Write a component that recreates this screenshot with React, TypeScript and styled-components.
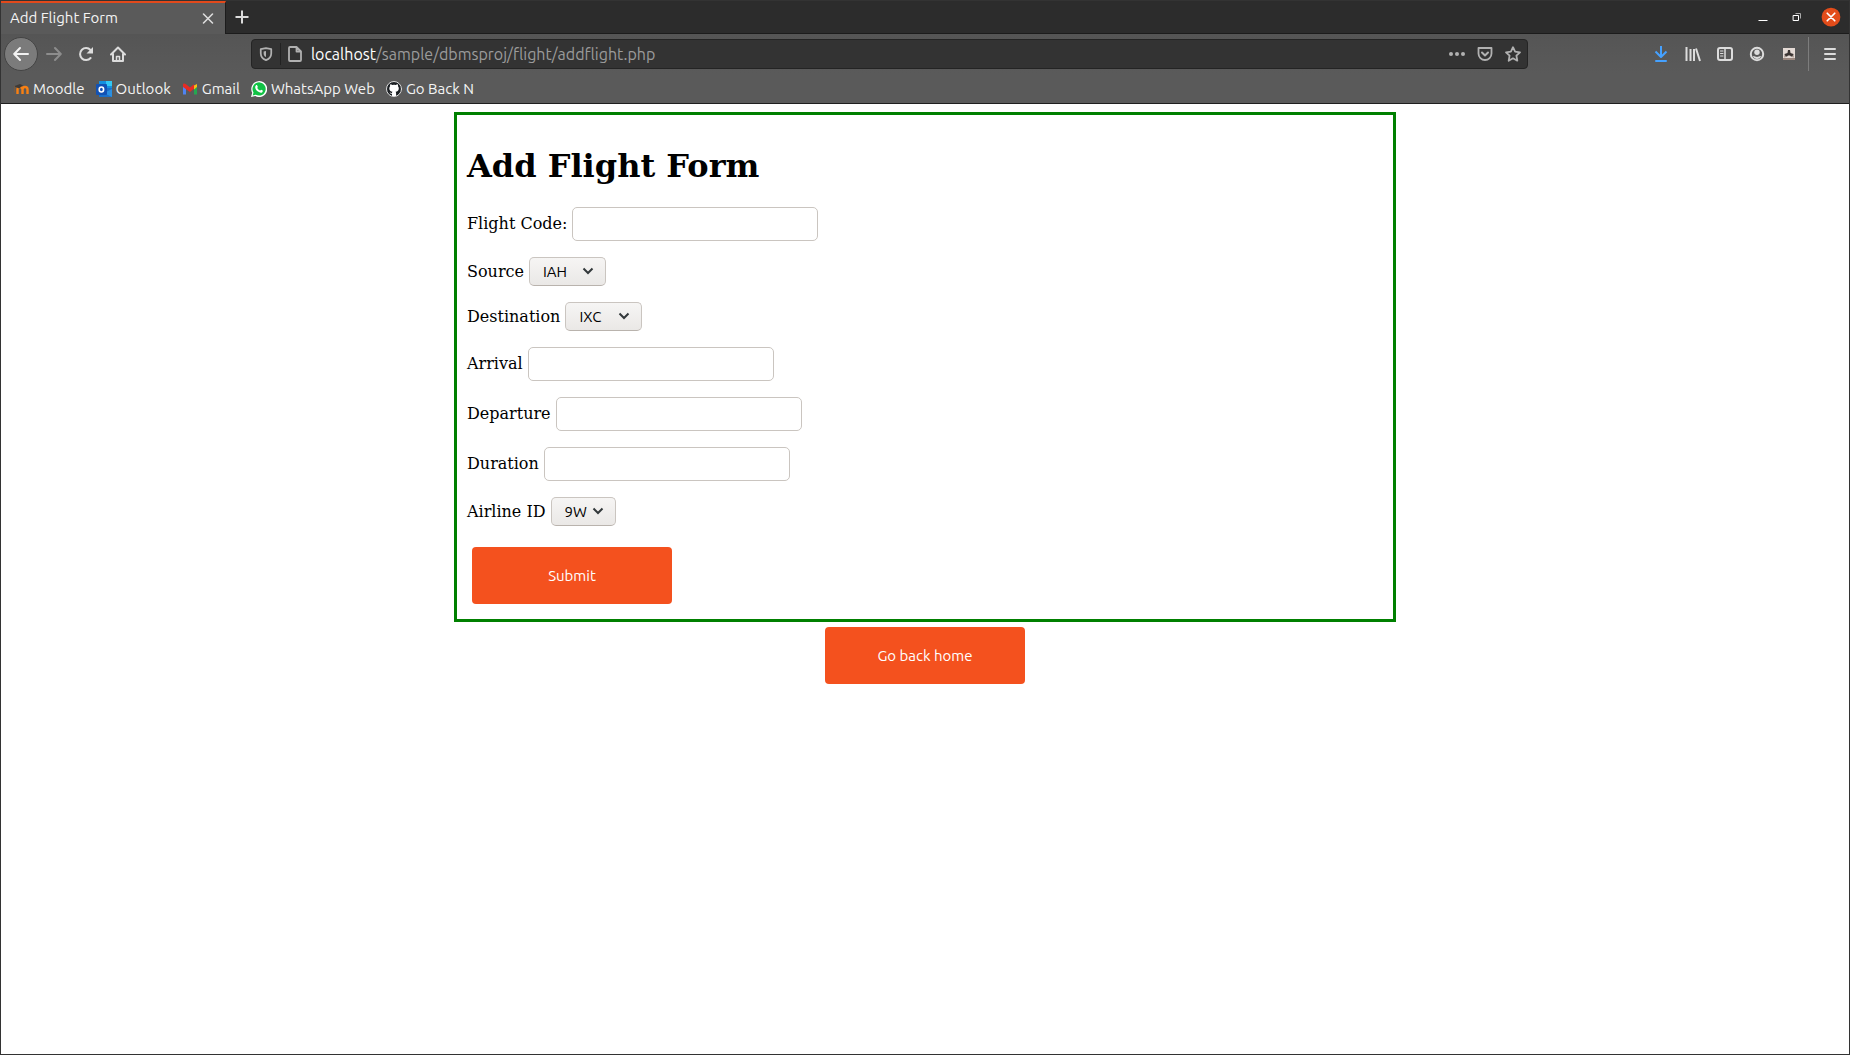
import React from "react";
import styled, { createGlobalStyle, css } from "styled-components";

const ui = `"Ubuntu", "Noto Sans", sans-serif`;
const serif = `"DejaVu Serif", serif`;

const GlobalStyle = createGlobalStyle`
  *, *::before, *::after { box-sizing: border-box; }
  body { margin: 0; background: #fff; }
  button, input, select { margin: 0; font: inherit; }
`;

const Window = styled.div`
  display: flex;
  flex-direction: column;
  min-height: 100vh;
  border: 1px solid #333;
  background: #fff;
  font-family: ${ui};
  font-size: 15px;
`;

const TitleBar = styled.header`
  display: flex;
  align-items: stretch;
  height: 33px;
  background: #2c2c2c;
`;

const Tab = styled.div`
  display: flex;
  align-items: center;
  justify-content: space-between;
  width: 225px;
  padding: 0 9px 2px;
  border-top: 2px solid #e2491b;
  border-right: 1px solid #1c1c1c;
  background: #5a5a5a;
  color: #f4f4f4;
`;

const TitleRest = styled.div`
  display: flex;
  flex: 1;
  align-items: center;
  justify-content: space-between;
  padding: 0 8px 0 0;
  border-bottom: 1px solid #1c1c1c;
`;

const WindowControls = styled.div`
  display: flex;
  align-items: center;
  gap: 14px;
`;

const IconButton = styled.button<{ $size?: number; $round?: boolean }>`
  display: flex;
  align-items: center;
  justify-content: center;
  flex: none;
  width: ${(p) => p.$size ?? 32}px;
  height: ${(p) => p.$size ?? 32}px;
  padding: 0;
  border: 0;
  background: transparent;
  color: #dcdcdc;
  ${(p) =>
    p.$round &&
    css`
      border: 1px solid #444;
      border-radius: 50%;
      background: #7b7b7b;
      color: #f2f2f2;
    `}
  &:disabled { color: #8d8d8d; }
`;

const NavBar = styled.nav`
  display: flex;
  align-items: center;
  height: 40px;
  padding: 0 3px;
  background: linear-gradient(#555, #5a5a5a);
`;

const Spacer = styled.div`
  flex: 11 1 0;
`;

const Divider = styled.span`
  width: 1px;
  height: 34px;
  margin: 0 5px 0 3px;
  background: #7d7d7d;
`;

const UrlBar = styled.div`
  display: flex;
  flex: 120 1 0;
  align-items: center;
  height: 30px;
  min-width: 0;
  border: 1px solid #242424;
  border-radius: 4px;
  background: #333;

  ${IconButton} {
    color: #b1b1b1;
  }
`;

const UrlDivider = styled.span`
  width: 1px;
  height: 22px;
  background: #222;
`;

const UrlText = styled.div`
  flex: 1;
  overflow: hidden;
  padding-left: 2px;
  color: #9b9b9b;
  font-size: 16px;
  white-space: nowrap;

  strong {
    color: #fff;
    font-weight: 400;
  }
`;

const Bookmarks = styled.nav`
  display: flex;
  align-items: center;
  gap: 11px;
  height: 30px;
  padding: 0 12px;
  border-bottom: 1px solid #1f1f1f;
  background: #5a5a5a;
`;

const Bookmark = styled.a`
  display: flex;
  align-items: center;
  gap: 4px;
  color: #f4f4f4;
  text-decoration: none;
  white-space: nowrap;
`;

const Page = styled.main`
  display: flex;
  flex-direction: column;
  align-items: center;
  flex: 1;
  gap: 5px;
  padding: 8px;
  color: #000;
`;

const FlightForm = styled.form`
  display: flex;
  flex-direction: column;
  align-items: flex-start;
  gap: 16px;
  box-sizing: content-box;
  width: 50%;
  padding: 10px 10px 15px;
  border: 3px solid #008000;
  font-family: ${serif};
  font-size: 16px;
`;

const Heading = styled.h1`
  margin: 22px 0 6px;
  font-size: 32px;
  line-height: 38px;
`;

const Field = styled.div`
  display: flex;
  align-items: baseline;
  gap: 5px;
`;

const TextInput = styled.input`
  width: 246px;
  height: 34px;
  padding: 0 8px 2px;
  border: 1px solid #cac5c0;
  border-radius: 5px;
  background: #fff;
  font-family: ${ui};
  font-size: 15px;
`;

const SelectBox = styled.span`
  position: relative;
  display: flex;
`;

const Select = styled.select<{ $narrow?: boolean }>`
  appearance: none;
  width: ${(p) => (p.$narrow ? 65 : 77)}px;
  height: 29px;
  padding: 0 0 0 13px;
  border: 1px solid #cac5c0;
  border-bottom-color: #b9b3ad;
  border-radius: 5px;
  background: linear-gradient(#f6f5f4, #eae8e6);
  color: #000;
  font-family: ${ui};
  font-size: 15px;
`;

const Chevron = styled.svg`
  position: absolute;
  top: 9px;
  right: 12px;
  pointer-events: none;
`;

const ActionButton = styled.button<{ $inForm?: boolean }>`
  width: 200px;
  height: 57px;
  margin: ${(p) => (p.$inForm ? "5px 0 0 5px" : "0")};
  border: 0;
  border-radius: 4px;
  background: #f4511e;
  color: #fff;
  font-family: ${ui};
  font-size: 15px;
`;

type IconProps = { size?: number; children: React.ReactNode; width?: number };

const Icon = ({ size = 16, width = 2, children }: IconProps) => (
  <svg
    width={size}
    height={size}
    viewBox="0 0 16 16"
    fill="none"
    stroke="currentColor"
    strokeWidth={width}
    strokeLinecap="round"
    strokeLinejoin="round"
    aria-hidden="true"
  >
    {children}
  </svg>
);

const MoodleIcon = () => (
  <Icon>
    <path d="M4.5 13V8.5a2.5 2.5 0 0 1 5 0V13M9.5 8.5a2.5 2.5 0 0 1 5 0V13" stroke="#f98012" strokeWidth="2.4" strokeLinecap="butt" />
    <path d="M1 5.2 7 3l3 1.5-4 3z" fill="#3f3a36" stroke="none" />
    <path d="M1.5 5.5V11" stroke="#7b5a3c" strokeWidth="1" />
  </Icon>
);

const OutlookIcon = () => (
  <Icon>
    <g stroke="none">
      <path d="M3 0h13v8H3z" fill="#1490df" />
      <path d="M10 0h6v5h-6z" fill="#32c8f5" />
      <path d="M3 7h13v9H3z" fill="#1a6fc9" />
      <path d="m16 8-8 4 8 4z" fill="#2b8fe0" />
      <rect x="0" y="3" width="11" height="11" rx="1" fill="#1252b4" />
    </g>
    <ellipse cx="5.4" cy="8.5" rx="2.2" ry="2.5" stroke="#fff" strokeWidth="1.6" />
  </Icon>
);

const GmailIcon = () => (
  <Icon>
    <g stroke="none">
      <path d="M1 5v8.5h3V7z" fill="#4f83f1" />
      <path d="M12 7v6.500h3V5z" fill="#25a750" />
      <path d="M12 4.500 15 3v3l-3 2.500z" fill="#f6bb13" />
      <path d="M1 3.500C1 2.300 2.800 2.200 4 3.300L8 6.500l4-3.200v4.500L8 11 1 6z" fill="#e62b24" />
    </g>
  </Icon>
);

const WhatsAppIcon = () => (
  <Icon>
    <path d="M0 16 1.200 11.800A8 8 0 1 1 4.300 15z" fill="#fff" stroke="none" />
    <path d="m1.700 14.400.8-2.900a6.600 6.600 0 1 1 2.300 2.200z" fill="#11c245" stroke="none" />
    <path d="M5 4.200c.5-.4 1-.3 1.200.2l.6 1.400c.1.400-.6 1-.5 1.300.6 1.200 1.400 1.900 2.600 2.400.4.100.9-.9 1.300-.8l1.500.8c.4.300 0 1.400-.7 1.900-1 .6-2.600.2-4-.8C5.400 9.500 4.300 8 4.200 6.500c0-1 .3-1.900.8-2.300z" fill="#fff" stroke="none" />
  </Icon>
);

const GitHubIcon = () => (
  <Icon>
    <circle cx="8" cy="8" r="7.500" fill="#1b1f23" stroke="#dedede" strokeWidth="1" />
    <path d="M6 15v-2.200c-1.500.2-2-.8-2.500-1.500 1 0 1.300.9 2.500.8 0-.6.200-1 .5-1.300-2-.3-3.200-1.300-3.200-3.500 0-.8.300-1.500.8-2-.2-.8-.1-1.500.2-2 .9 0 1.500.4 2 .8a7 7 0 0 1 3.500 0c.5-.4 1.200-.8 2-.8.300.6.300 1.300.2 2 .5.500.8 1.200.8 2 0 2.200-1.300 3.200-3.200 3.500.4.500.500 1 .500 1.500V15z" fill="#fff" stroke="none" />
  </Icon>
);

const bookmarks = [
  { label: "Moodle", icon: <MoodleIcon /> },
  { label: "Outlook", icon: <OutlookIcon /> },
  { label: "Gmail", icon: <GmailIcon /> },
  { label: "WhatsApp Web", icon: <WhatsAppIcon /> },
  { label: "Go Back N", icon: <GitHubIcon /> },
];

const TextField = ({ id, label }: { id: string; label: string }) => (
  <Field>
    <label htmlFor={id}>{label}</label>
    <TextInput id={id} name={id} type="text" />
  </Field>
);

type SelectFieldProps = { id: string; label: string; value: string; narrow?: boolean };

const SelectField = ({ id, label, value, narrow }: SelectFieldProps) => (
  <Field>
    <label htmlFor={id}>{label}</label>
    <SelectBox>
      <Select id={id} name={id} defaultValue={value} $narrow={narrow}>
        <option>{value}</option>
      </Select>
      <Chevron width="12" height="10" viewBox="0 0 12 10" fill="none" stroke="#33393b" strokeWidth="2">
        <path d="m1.500 2.500 4.500 4.500 4.500-4.500" />
      </Chevron>
    </SelectBox>
  </Field>
);

export default function App() {
  return (
    <>
      <GlobalStyle />
      <Window>
        <TitleBar>
          <Tab>
            <span>Add Flight Form</span>
            <IconButton $size={16} aria-label="Close tab">
              <Icon width={1.6}><path d="m3.500 4 9 9M12.500 4l-9 9" /></Icon>
            </IconButton>
          </Tab>
          <TitleRest>
            <IconButton aria-label="New tab">
              <Icon><path d="M8 1.500v13M1.500 8h13" strokeLinecap="butt" /></Icon>
            </IconButton>
            <WindowControls>
              <IconButton $size={20} aria-label="Minimize">
                <Icon><path d="M4 11.500h8" stroke="#fff" strokeWidth="1" strokeLinecap="square" /></Icon>
              </IconButton>
              <IconButton $size={20} aria-label="Restore">
                <Icon width={1}>
                  <path d="M6.500 4.500h5v5" stroke="#aaa" strokeLinecap="butt" />
                  <path d="M4.500 6.500h5v5h-5z" stroke="#fff" strokeLinejoin="miter" />
                </Icon>
              </IconButton>
              <IconButton $size={20} aria-label="Close window">
                <Icon size={20} width={1.400}>
                  <circle cx="8" cy="8" r="7.500" fill="#e24c1a" stroke="none" />
                  <path d="m5 5 6 6M11 5l-6 6" stroke="#fff" />
                </Icon>
              </IconButton>
            </WindowControls>
          </TitleRest>
        </TitleBar>

        <NavBar>
          <IconButton $size={34} $round aria-label="Back">
            <Icon><path d="M15 8H1.500M7 2 1.200 8 7 14" /></Icon>
          </IconButton>
          <IconButton disabled aria-label="Forward">
            <Icon><path d="M1 8h13.500M9 2l5.800 6L9 14" /></Icon>
          </IconButton>
          <IconButton aria-label="Reload">
            <Icon>
              <path d="M12.600 12A6 6 0 1 1 12.500 4" />
              <path d="M15 1v6.500H8.500z" fill="currentColor" stroke="none" />
            </Icon>
          </IconButton>
          <IconButton aria-label="Home">
            <Icon>
              <path d="M1 8.500 8 1.500l7 7M3 8v7h10V8" />
              <path d="M6.500 15v-4.500h3V15" strokeWidth="1.500" />
            </Icon>
          </IconButton>
          <Spacer />
          <UrlBar>
            <IconButton $size={28} aria-label="Tracking protection">
              <Icon size={14} width={2}>
                <path d="M8 1.200 14 2.500V7c0 4-2.500 6.500-6 8C4.500 13.500 2 11 2 7V2.500z" />
                <path d="M8 4.500v7C6 10.300 5.300 9 5.300 7V5z" fill="currentColor" stroke="none" />
              </Icon>
            </IconButton>
            <UrlDivider />
            <IconButton $size={28} aria-label="Site information">
              <Icon width={1.800}><path d="M3.500 1h6L14 5.500V14a1 1 0 0 1-1 1H3a1 1 0 0 1-1-1V2a1 1 0 0 1 1-1zM9.500 1v4.500H14" /></Icon>
            </IconButton>
            <UrlText><strong>localhost</strong>/sample/dbmsproj/flight/addflight.php</UrlText>
            <IconButton $size={28} aria-label="Page actions">
              <Icon>
                <g fill="currentColor" stroke="none"><circle cx="2" cy="8" r="2" /><circle cx="8" cy="8" r="2" /><circle cx="14" cy="8" r="2" /></g>
              </Icon>
            </IconButton>
            <IconButton $size={28} aria-label="Save to Pocket">
              <Icon><path d="M1.500 2h13v5.500a6.500 6.500 0 0 1-13 0z" strokeWidth="1.800" /><path d="m5 6.500 3 3 3-3" /></Icon>
            </IconButton>
            <IconButton $size={28} aria-label="Bookmark this page">
              <Icon width={1.800}><path d="m8 1.200 2.100 4.500 4.900.6-3.600 3.400.9 5L8 12.300l-4.300 2.400.9-5L1 6.300l4.900-.6z" /></Icon>
            </IconButton>
          </UrlBar>
          <Spacer />
          <IconButton aria-label="Downloads">
            <Icon><g stroke="#45a1ff"><path d="M8 0v10.500M2.500 5.500l5.500 5.500 5.500-5.500" strokeLinecap="butt" /><path d="M3 15h10" /></g></Icon>
          </IconButton>
          <IconButton aria-label="Library">
            <Icon><path d="M1.500 1v14M5.500 3v12M9 3v12M11 2.500 15 15" strokeLinecap="butt" /></Icon>
          </IconButton>
          <IconButton aria-label="Sidebars">
            <Icon><rect x="1" y="2" width="14" height="12" rx="2" /><path d="M8 2v12" strokeWidth="1.500" /><path d="M3.500 5h2.500M3.500 7.500h2.500M3.500 10H6" strokeWidth="1" /></Icon>
          </IconButton>
          <IconButton aria-label="Account">
            <Icon><circle cx="8" cy="8" r="6.200" /><circle cx="8" cy="6.200" r="2.700" fill="currentColor" stroke="none" /><path d="M4 10h8c-.5 2-2 3-4 3s-3.500-1-4-3z" fill="currentColor" stroke="none" /><path d="M5 9.600c1.700 1.200 4.300 1.200 6 0" stroke="#5a5a5a" strokeWidth="1" /></Icon>
          </IconButton>
          <IconButton aria-label="Extension">
            <Icon>
              <g stroke="none">
                <rect x="2" y="2" width="12" height="12" fill="#e4dad5" />
                <path d="M2 12h12v2H2z" fill="#9a877e" />
                <path d="M3.500 8 6.500 7 7 4h2l.5 3 3 1-.5 2.500h-2L9 9.500H7l-1 1H4z" fill="#3b3432" />
                <path d="M3 9.500h1.500v2H3zM11.500 9.500H13v2h-1.500z" fill="#b7a59b" />
              </g>
            </Icon>
          </IconButton>
          <Divider />
          <IconButton aria-label="Menu">
            <Icon><path d="M3 3h10M3 8h10M3 13h10" /></Icon>
          </IconButton>
        </NavBar>

        <Bookmarks aria-label="Bookmarks">
          {bookmarks.map((b) => (
            <Bookmark key={b.label} href="#">
              {b.icon}
              {b.label}
            </Bookmark>
          ))}
        </Bookmarks>

        <Page>
          <FlightForm onSubmit={(e) => e.preventDefault()}>
            <Heading>Add Flight Form</Heading>
            <TextField id="code" label="Flight Code:" />
            <SelectField id="source" label="Source" value="IAH" />
            <SelectField id="destination" label="Destination" value="IXC" />
            <TextField id="arrival" label="Arrival" />
            <TextField id="departure" label="Departure" />
            <TextField id="duration" label="Duration" />
            <SelectField id="airline" label="Airline ID" value="9W" narrow />
            <ActionButton type="submit" $inForm>Submit</ActionButton>
          </FlightForm>
          <ActionButton type="button">Go back home</ActionButton>
        </Page>
      </Window>
    </>
  );
}
